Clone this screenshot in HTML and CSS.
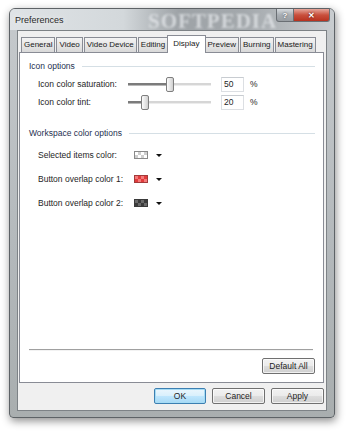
FILE: index.html
```html
<!DOCTYPE html>
<html lang="en">
<head>
    <meta charset="UTF-8">
    <meta name="viewport" content="width=device-width, initial-scale=1.0">
    <title>Preferences</title>
    <link rel="stylesheet" href="styles.css">
</head>
<body>
    <div class="window">
        <div class="titlebar">
            <span class="title">Preferences</span>
            <span class="watermark">SOFTPEDIA</span>
            <div class="caption-btns">
                <span class="btn-help">?</span>
                <span class="btn-close">&#x2715;</span>
            </div>
        </div>
        <div class="client">
            <div class="tabs">
                <div class="tab">General</div>
                <div class="tab">Video</div>
                <div class="tab">Video Device</div>
                <div class="tab">Editing</div>
                <div class="tab active">Display</div>
                <div class="tab">Preview</div>
                <div class="tab">Burning</div>
                <div class="tab">Mastering</div>
            </div>
            <div class="panel">
                <div class="group">
                    <span>Icon options</span>
                    <div class="group-line"></div>
                </div>
                <div class="row slider-row first">
                    <span class="label">Icon color saturation:</span>
                    <div class="slider">
                        <div class="track-fill fill-sat"></div>
                        <div class="thumb"></div>
                        <div class="track-rest"></div>
                    </div>
                    <div class="num">50</div>
                    <span class="pct">%</span>
                </div>
                <div class="row slider-row">
                    <span class="label">Icon color tint:</span>
                    <div class="slider">
                        <div class="track-fill fill-tint"></div>
                        <div class="thumb"></div>
                        <div class="track-rest"></div>
                    </div>
                    <div class="num">20</div>
                    <span class="pct">%</span>
                </div>

                <div class="group group2">
                    <span>Workspace color options</span>
                    <div class="group-line"></div>
                </div>
                <div class="row color-row first">
                    <span class="label wide">Selected items color:</span>
                    <span class="swatch sw-gray"></span>
                    <span class="arrow"></span>
                </div>
                <div class="row color-row">
                    <span class="label wide">Button overlap color 1:</span>
                    <span class="swatch sw-red"></span>
                    <span class="arrow"></span>
                </div>
                <div class="row color-row">
                    <span class="label wide">Button overlap color 2:</span>
                    <span class="swatch sw-dark"></span>
                    <span class="arrow"></span>
                </div>

                <div class="spacer"></div>
                <div class="sep"></div>
                <div class="panel-foot">
                    <button class="btn btn-default">Default All</button>
                </div>
            </div>
            <div class="dialog-btns">
                <button class="btn btn-ok">OK</button>
                <button class="btn">Cancel</button>
                <button class="btn">Apply</button>
            </div>
        </div>
    </div>
</body>
</html>
```

FILE: styles.css
```css
body {
    margin: 0;
    width: 350px;
    height: 431px;
    background-color: #ffffff;
    font-family: "Liberation Sans", Arial, sans-serif;
    font-size: 8.5px;
    color: #1e1e1e;
    overflow: hidden;
}
.window {
    margin: 8px 0 0 9px;
    width: 326px;
    height: 410px;
    box-sizing: border-box;
    border: 1px solid #5d6266;
    border-radius: 6px 6px 4px 4px;
    background: linear-gradient(180deg, #c6cacd 0%, #b3b8bb 60%, #a9aeaf 100%);
    box-shadow: 1px 3px 9px rgba(0, 0, 0, 0.45);
    display: flex;
    flex-direction: column;
}
.titlebar {
    position: relative;
    height: 21px;
    display: flex;
    align-items: center;
    padding-left: 5px;
    border-radius: 5px 5px 0 0;
    background: linear-gradient(90deg, #dfe3e6 0%, #d3d8db 35%, #9ea3a7 52%, #a3a8ac 72%, #c9cdd0 100%);
}
.title {
    font-size: 9px;
    color: #2a2a2a;
    text-shadow: 0 0 6px #ffffff;
}
.watermark {
    position: absolute;
    left: 138px;
    top: 0;
    font-family: "Liberation Serif", serif;
    font-weight: bold;
    font-size: 21px;
    letter-spacing: 1px;
    color: rgba(232, 235, 238, 0.7);
    filter: blur(1.2px);
}
.caption-btns {
    position: absolute;
    right: 4px;
    top: 0;
    display: flex;
}
.caption-btns span {
    height: 12px;
    display: flex;
    align-items: center;
    justify-content: center;
    font-size: 8px;
    font-weight: bold;
    color: #ffffff;
    border: 1px solid #6a6f74;
    border-top: none;
}
.btn-help {
    width: 16px;
    border-radius: 0 0 0 3px;
    background: linear-gradient(180deg, #d6dade, #a9aeb3 50%, #999ea3);
    text-shadow: 0 0 2px #333;
}
.btn-close {
    width: 35px;
    border-left: none !important;
    border-radius: 0 0 3px 0;
    background: linear-gradient(180deg, #e6a79c, #c9503d 50%, #b8321f);
    text-shadow: 0 0 2px #400;
}
.client {
    flex: 1;
    margin: 0 7px 6px 7px;
    background-color: #f0f0f0;
    border: 1px solid #7d8286;
    padding: 4px 2px 0 1px;
    display: flex;
    flex-direction: column;
}
.tabs {
    display: flex;
    align-items: flex-end;
    height: 17px;
    padding-left: 2px;
    position: relative;
    z-index: 1;
}
.tab {
    flex-shrink: 0;
    white-space: nowrap;
    font-size: 8px;
    height: 14px;
    line-height: 14px;
    padding: 0 2px;
    margin-right: 1px;
    border: 1px solid #898c95;
    border-bottom: none;
    background: linear-gradient(180deg, #f4f4f4, #e6e6e6 50%, #d9d9d9);
    color: #202020;
}
.tab.active {
    height: 17px;
    line-height: 15px;
    background: #ffffff;
    margin: 0 -1px -1px -2px;
    padding: 0 5px;
}
.panel {
    flex: 1;
    background-color: #ffffff;
    border: 1px solid #898c95;
    display: flex;
    flex-direction: column;
    padding: 5px 8px 8px 9px;
}
.group {
    display: flex;
    align-items: center;
    height: 16px;
    color: #1e3050;
}
.group2 {
    margin-top: 14px;
}
.group-line {
    flex: 1;
    height: 1px;
    background-color: #d5dfe5;
    margin-left: 7px;
}
.row {
    display: flex;
    align-items: center;
    padding-left: 9px;
}
.slider-row {
    height: 18px;
}
.slider-row.first {
    margin-top: 1px;
}
.color-row {
    height: 24px;
}
.color-row.first {
    margin-top: 2px;
}
.label {
    width: 90px;
    white-space: nowrap;
}
.label.wide {
    width: 96px;
}
.slider {
    width: 83px;
    height: 15px;
    display: flex;
    align-items: center;
}
.track-fill {
    height: 2px;
    background-color: #7b7b7b;
    border-bottom: 1px solid #b8b8b8;
}
.fill-sat {
    width: 38px;
}
.fill-tint {
    width: 13px;
}
.track-rest {
    flex: 1;
    height: 2px;
    background-color: #d6d6d6;
    border-bottom: 1px solid #ececec;
}
.thumb {
    width: 6px;
    height: 13px;
    border: 1px solid #7e7e7e;
    border-radius: 2px;
    background: linear-gradient(90deg, #fbfbfb, #e2e2e2 60%, #cfcfcf);
}
.num {
    margin-left: 10px;
    width: 19px;
    height: 13px;
    line-height: 13px;
    padding-left: 2px;
    border: 1px solid #dcdfe3;
    border-top-color: #c8ccd1;
    background-color: #ffffff;
}
.pct {
    margin-left: 6px;
}
.swatch {
    width: 12px;
    height: 6px;
    border: 1px solid #8a8a8a;
}
.sw-gray {
    background: repeating-conic-gradient(#cfcfcf 0 25%, #ffffff 0 50%) 0 0 / 6px 6px;
}
.sw-red {
    border-color: #a23a3a;
    background: repeating-conic-gradient(#e23c3c 0 25%, #f47a7a 0 50%) 0 0 / 6px 6px;
}
.sw-dark {
    border-color: #3a3a3a;
    background: repeating-conic-gradient(#3c3c3c 0 25%, #6b6b6b 0 50%) 0 0 / 6px 6px;
}
.arrow {
    margin-left: 8px;
    width: 0;
    height: 0;
    border-left: 3px solid transparent;
    border-right: 3px solid transparent;
    border-top: 3px solid #111111;
    margin-top: 1px;
}
.spacer {
    flex: 1;
}
.sep {
    height: 1px;
    background-color: #a0a0a0;
    border-bottom: 1px solid #f2f2f2;
    margin-right: 2px;
}
.panel-foot {
    display: flex;
    justify-content: flex-end;
    margin-top: 7px;
}
.btn {
    font-family: "Liberation Sans", Arial, sans-serif;
    font-size: 8.5px;
    color: #1e1e1e;
    height: 16px;
    width: 53px;
    padding: 0;
    border: 1px solid #707070;
    border-radius: 2px;
    background: linear-gradient(180deg, #f2f2f2 0%, #ebebeb 48%, #dddddd 52%, #cfcfcf 100%);
    box-shadow: inset 0 0 0 1px rgba(255, 255, 255, 0.7);
}
.btn-default {
    width: 53px;
}
.dialog-btns {
    display: flex;
    justify-content: flex-end;
    gap: 6px;
    margin-top: 5px;
    margin-bottom: 6px;
}
.btn-ok {
    width: 52px;
    border-color: #3c7fb1;
    box-shadow: inset 0 0 0 1px #a6dcf5;
    background: linear-gradient(180deg, #eaf6fd 0%, #d9f0fc 48%, #bee6fd 52%, #a7d9f5 100%);
}
```
